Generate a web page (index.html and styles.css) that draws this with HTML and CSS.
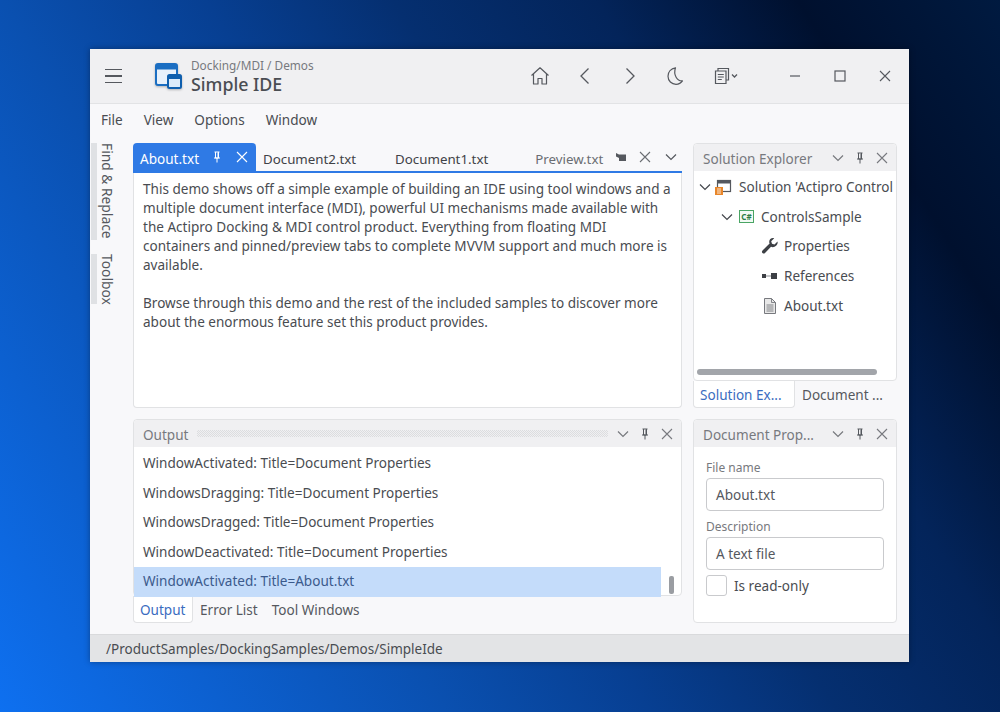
FILE: index.html
```html
<!DOCTYPE html>
<html lang="en">
<head>
<meta charset="utf-8">
<title>Simple IDE</title>
<link rel="stylesheet" href="styles.css">
</head>
<body>
<svg class="defs" width="0" height="0" aria-hidden="true">
  <defs>
    <symbol id="x" viewBox="0 0 12 12"><path d="M1 1l10 10M11 1L1 11" fill="none" stroke="currentColor" stroke-width="1.1"/></symbol>
    <symbol id="chev" viewBox="0 0 12 8"><path d="M1 1.5l5 5 5-5" fill="none" stroke="currentColor" stroke-width="1.2"/></symbol>
    <symbol id="pin" viewBox="0 0 8 12"><path d="M1.5 1h5M2.5 1v6h3V1M1 7h6M4 7v4.5M5 1.500v5" fill="none" stroke="currentColor" stroke-width="1"/></symbol>
  </defs>
</svg>
<div class="window">
  <header class="titlebar">
    <button class="hamburger" aria-label="Menu"><span></span><span></span><span></span></button>
    <svg class="logo" width="28" height="28" viewBox="0 0 28 28">
      <rect x="1" y="2" width="21" height="21" rx="2" fill="#e8f1fb" stroke="#1b6ec2" stroke-width="2"/>
      <path d="M1 3h21v4.500H1z" fill="#1b6ec2"/>
      <rect x="13" y="13" width="13" height="13" rx="1.500" fill="#dcebfa" stroke="#0f5fae" stroke-width="2"/>
      <path d="M13 14h13v3H13z" fill="#0f5fae"/>
    </svg>
    <div class="brand">
      <div class="crumb">Docking/MDI / Demos</div>
      <div class="app">Simple IDE</div>
    </div>
    <div class="tools">
      <svg class="tool" width="20" height="20" viewBox="0 0 20 20"><path d="M1.500 9.500L10 1.800l8.500 7.700M3.500 8v10h4.500v-5.500h4V18h4.500V8" fill="none" stroke="#55585e" stroke-width="1.200" stroke-linejoin="round"/></svg>
      <svg class="tool" width="20" height="20" viewBox="0 0 20 20"><path d="M13.500 2.500L6 10l7.500 7.500" fill="none" stroke="#55585e" stroke-width="1.300"/></svg>
      <svg class="tool" width="20" height="20" viewBox="0 0 20 20"><path d="M6.500 2.500L14 10l-7.500 7.500" fill="none" stroke="#55585e" stroke-width="1.300"/></svg>
      <svg class="tool" width="20" height="20" viewBox="0 0 20 20"><path d="M10.500 1.800C6 2.500 3 6 3 10.300c0 4.500 3.600 8 8 8 2.800 0 5-1.200 6.500-3.400-5.200.5-9.500-6-7-13.100z" fill="none" stroke="#55585e" stroke-width="1.200" stroke-linejoin="round"/></svg>
      <svg class="tool wide" width="27" height="20" viewBox="0 0 27 20"><path d="M4 5V2.500h10.500v11.500H12M1.500 5h10.500v12.500H1.500zM3.800 8.500h6M3.800 11h6M3.800 13.500h4" fill="none" stroke="#55585e" stroke-width="1.200"/><path d="M18 8.500l2.500 2.500 2.500-2.500" fill="none" stroke="#55585e" stroke-width="1.300"/></svg>
    </div>
    <div class="winbtns">
      <svg width="12" height="12" viewBox="0 0 12 12"><path d="M1 6h10" stroke="#55585e" stroke-width="1.200"/></svg>
      <svg width="12" height="12" viewBox="0 0 12 12"><rect x="1" y="1" width="10" height="10" fill="none" stroke="#55585e" stroke-width="1.200"/></svg>
      <svg width="12" height="12" class="wx"><use href="#x"/></svg>
    </div>
  </header>
  <nav class="menu"><span>File</span><span>View</span><span>Options</span><span>Window</span></nav>
  <div class="main">
    <aside class="rail">
      <div class="railtab first">Find &amp; Replace</div>
      <div class="railtab">Toolbox</div>
    </aside>
    <div class="dock">
      <section class="doc">
        <div class="doctabs">
          <div class="dtab active">About.txt<svg class="pin" width="8" height="12"><use href="#pin"/></svg><svg class="xi" width="12" height="12"><use href="#x"/></svg></div>
          <div class="dtab d2">Document2.txt</div>
          <div class="dtab d1">Document1.txt</div>
          <div class="dtab prev">Preview.txt</div>
          <svg class="previcon" width="10" height="8" viewBox="0 0 10 8"><path d="M0 0l3 1.500h7V8H3V5L0 3.500z" fill="#55585e"/></svg>
          <svg class="xi gr" width="12" height="12"><use href="#x"/></svg>
          <svg class="chev" width="12" height="8"><use href="#chev"/></svg>
        </div>
        <div class="docbody">
          <p>This demo shows off a simple example of building an IDE using tool windows and a multiple document interface (MDI), powerful UI mechanisms made available with the Actipro Docking &amp; MDI control product. Everything from floating MDI containers and pinned/preview tabs to complete MVVM support and much more is available.</p>
          <p>Browse through this demo and the rest of the included samples to discover more about the enormous feature set this product provides.</p>
        </div>
      </section>

      <section class="side">
        <div class="panel grow">
          <div class="phead"><span class="ptitle">Solution Explorer</span><svg class="chev" width="12" height="8"><use href="#chev"/></svg><svg class="pin" width="8" height="12"><use href="#pin"/></svg><svg class="xi" width="12" height="12"><use href="#x"/></svg></div>
          <div class="tree">
            <div class="node l0"><svg class="tw" width="12" height="8"><use href="#chev"/></svg>
              <svg class="ni" width="18" height="18" viewBox="0 0 18 18"><rect x="3.500" y="2.500" width="13" height="11" fill="#fff" stroke="#55585e" stroke-width="1.200"/><path d="M3.500 3h13v2.500h-13z" fill="#55585e"/><rect x="1" y="9" width="8" height="8" fill="#e8862a"/><path d="M3 11h4M3 13h4M3 15h4" stroke="#fff" stroke-width=".8"/></svg>
              <span class="clip">Solution 'Actipro Control</span></div>
            <div class="node l1"><svg class="tw" width="12" height="8"><use href="#chev"/></svg>
              <span class="cs">C#</span>ControlsSample</div>
            <div class="node l2">
              <svg class="ni" width="18" height="18" viewBox="0 0 18 18"><path d="M16.500 4.500l-3 3-2.500-.8-.8-2.500 3-3c-2.500-.8-5 1-5 3.500 0 .7.100 1.200.4 1.800L1.500 13.500c-.8.800-.8 1.800 0 2.500s1.700.8 2.500 0L10 9.800c.6.300 1.200.4 1.800.4 2.700 0 5.500-2.700 4.700-5.700z" fill="#3d4045"/></svg>Properties</div>
            <div class="node l2">
              <svg class="ni" width="18" height="18" viewBox="0 0 18 18"><rect x="1" y="7" width="4" height="4" fill="#3d4045"/><path d="M5 9h5" stroke="#8a8d92"/><rect x="10" y="6" width="6" height="6" fill="#3d4045"/></svg>References</div>
            <div class="node l2">
              <svg class="ni" width="18" height="18" viewBox="0 0 18 18"><path d="M3.500 1.500h7l4 4v11h-11z" fill="#e8e8e8" stroke="#77797e"/><path d="M10.500 1.500v4h4M5.500 8h7M5.500 10h7M5.500 12h7M5.500 14h7" fill="none" stroke="#77797e" stroke-width=".9"/></svg>About.txt</div>
          </div>
          <div class="hscroll"><span></span></div>
        </div>
        <div class="ptabs">
          <div class="ptab on">Solution Ex...</div>
          <div class="ptab">Document ...</div>
        </div>
      </section>

      <section class="out">
        <div class="panel grow">
          <div class="phead"><span class="ptitle short">Output</span><span class="grip"></span><svg class="chev" width="12" height="8"><use href="#chev"/></svg><svg class="pin" width="8" height="12"><use href="#pin"/></svg><svg class="xi" width="12" height="12"><use href="#x"/></svg></div>
          <div class="log">
            <div class="line">WindowActivated: Title=Document Properties</div>
            <div class="line">WindowsDragging: Title=Document Properties</div>
            <div class="line">WindowsDragged: Title=Document Properties</div>
            <div class="line">WindowDeactivated: Title=Document Properties</div>
            <div class="line sel">WindowActivated: Title=About.txt</div>
            <span class="vthumb"></span>
          </div>
        </div>
        <div class="ptabs low">
          <div class="ptab on">Output</div>
          <div class="ptab">Error List</div>
          <div class="ptab">Tool Windows</div>
        </div>
      </section>

      <section class="props panel">
        <div class="phead"><span class="ptitle">Document Prop...</span><svg class="chev" width="12" height="8"><use href="#chev"/></svg><svg class="pin" width="8" height="12"><use href="#pin"/></svg><svg class="xi" width="12" height="12"><use href="#x"/></svg></div>
        <form class="form">
          <label class="lab">File name</label>
          <div class="input">About.txt</div>
          <label class="lab second">Description</label>
          <div class="input">A text file</div>
          <div class="check"><span class="box"></span>Is read-only</div>
        </form>
      </section>
    </div>
  </div>
  <footer class="status">/ProductSamples/DockingSamples/Demos/SimpleIde</footer>
</div>
</body>
</html>
```

FILE: styles.css
```css
* { box-sizing: border-box; }
html, body { height: 100%; }
body {
  margin: 0;
  padding: 49px 91px 50px 90px;
  overflow: hidden;
  background: linear-gradient(58deg, #0e70f0 0%, #0a50b0 31%, #073f92 45%, #052f70 58%, #03245a 72%, #00102e 86%, #001a40 100%);
  font-family: "Noto Sans", "Open Sans", sans-serif;
  font-size: 13.55px;
  color: #494c51;
}
.defs { position: absolute; }
svg { display: block; flex: none; }
.window {
  height: 613px;
  display: flex;
  flex-direction: column;
  background: #f8f8fa;
  box-shadow: 0 0 6px rgba(0, 0, 0, .35);
}
.titlebar {
  height: 55px;
  flex: none;
  display: flex;
  align-items: center;
  background: #f0f0f2;
  border-bottom: 1px solid #e2e3e5;
}
.hamburger {
  width: 17px;
  height: 14px;
  margin-left: 15px;
  padding: 0;
  border: 0;
  background: none;
  display: flex;
  flex-direction: column;
  justify-content: space-between;
}
.hamburger span { display: block; height: 1.300px; background: #55585e; }
.logo { margin-left: 33px; filter: drop-shadow(0 1px 1px rgba(0,0,0,.25)); }
.brand { margin-left: 8px; }
.crumb { font-size: 11.800px; line-height: 15px; color: #77797e; }
.app { font-size: 17.800px; line-height: 22px; font-weight: 500; color: #4a4d52; }
.tools { margin-left: auto; display: flex; align-items: center; gap: 25px; }
.tool.wide { margin-left: 4px; }
.winbtns { margin-left: 48px; margin-right: 18px; display: flex; gap: 33px; color: #55585e; }
.menu {
  height: 33px;
  flex: none;
  display: flex;
  align-items: center;
  gap: 21px;
  padding: 0 0 2px 11px;
}
.main { flex: 1; display: flex; min-height: 0; }
.rail { width: 43px; flex: none; padding-top: 6px; }
.railtab {
  writing-mode: vertical-rl;
  width: 27px;
  margin-left: 1px;
  font-size: 13.800px;
  line-height: 22px;
  color: #55585e;
  border-left: 6px solid #dfe1e4;
}
.railtab.first { height: 97px; margin-bottom: 14px; }
.railtab:not(.first) { height: 50px; }
.dock {
  flex: 1;
  display: grid;
  grid-template-columns: 549px 204px;
  grid-template-rows: 265px 204px;
  gap: 11px;
  padding-top: 6px;
  align-content: start;
}
.doc, .side, .out { display: flex; flex-direction: column; min-width: 0; min-height: 0; }
.doctabs {
  height: 30px;
  flex: none;
  display: flex;
  align-items: center;
  font-size: 13.300px;
  color: #3f4247;
  border-bottom: 2px solid #2f7ae5;
}
.dtab { height: 28px; display: flex; align-items: center; flex: none; padding-top: 4px; }
.dtab.active {
  width: 123px;
  padding-left: 7px;
  font-size: 13.550px;
  background: #2f7ae5;
  color: #fff;
  border-radius: 4px 4px 0 0;
}
.dtab.active .pin { margin-left: 14px; margin-top: -4px; }
.dtab.active .xi { margin-left: 15px; margin-top: -4px; }
.d2 { margin-left: 7px; }
.d1 { margin-left: 39px; }
.prev { margin-left: 47px; color: #6a6d72; }
.previcon { margin-left: 13px; }
.xi.gr { margin-left: 13px; color: #6a6d72; }
.doctabs .chev { margin-left: 14px; color: #55585e; }
.docbody {
  flex: 1;
  padding: 7px 9px;
  background: #fff;
  border: 1px solid #e1e2e4;
  border-top: 0;
  border-radius: 0 0 4px 4px;
  line-height: 19px;
}
.docbody p { margin: 0 0 19px; }
.panel {
  display: flex;
  flex-direction: column;
  background: #fff;
  border: 1px solid #e1e2e4;
  border-radius: 4px;
  min-height: 0;
}
.grow { flex: 1; }
.phead {
  height: 27px;
  flex: none;
  display: flex;
  align-items: center;
  padding: 0 8px 0 9px;
  background: #f0f0f2;
  border-radius: 4px 4px 0 0;
  color: #77797e;
}
.ptitle { flex: 1; white-space: nowrap; padding-top: 2px; }
.ptitle.short { flex: none; }
.phead .chev { color: #77797e; }
.phead .pin { margin-left: 12px; color: #55585e; }
.phead .xi { margin-left: 12px; color: #77797e; }
.grip {
  flex: 1;
  height: 7px;
  margin: 0 9px;
  background: repeating-conic-gradient(#dcdddf 0 25%, #f0f0f2 0 50%) 0 0 / 2px 2px;
}
.tree { flex: 1; padding-top: 1px; overflow: hidden; }
.node {
  height: 29.800px;
  display: flex;
  align-items: center;
  white-space: nowrap;
}
.node .tw { color: #44474c; }
.node .ni { margin-right: 5px; }
.l0 { padding-left: 5px; }
.l0 .ni { margin-left: 3px; margin-right: 7px; }
.l1 { padding-left: 27px; }
.l1 .tw { margin-right: 6px; }
.l2 { padding-left: 67px; }
.cs {
  width: 15px;
  height: 13px;
  margin-right: 7px;
  border: 1px solid #4aa564;
  color: #2f7d45;
  font-size: 8px;
  font-weight: 700;
  line-height: 11px;
  text-align: center;
  background: #f2faf4;
}
.hscroll { height: 12px; flex: none; padding: 1px 19px 5px 3px; }
.hscroll span { display: block; height: 6px; background: #a2a5aa; border-radius: 3px; }
.ptabs { height: 27px; flex: none; display: flex; color: #55585e; }
.ptab { height: 27px; line-height: 29px; padding: 0 7px; white-space: nowrap; }
.ptab.on {
  color: #3a6cc0;
  background: #fff;
  border: 1px solid #e1e2e4;
  border-top: 0;
  border-radius: 0 0 4px 4px;
  padding: 0 6px;
}
.side .ptab.on { width: 102px; }
.log { flex: 1; position: relative; padding-top: 2px; }
.line { height: 29.600px; line-height: 28.500px; padding-left: 9px; }
.line.sel { width: 527px; background: #c4dcfa; color: #3b5a8c; }
.vthumb {
  position: absolute;
  right: 7px;
  bottom: 3px;
  width: 5px;
  height: 18px;
  background: #9a9da2;
  border-radius: 2px;
}
.low .ptab.on { width: 60px; }
.form { padding: 12px 12px 0; display: flex; flex-direction: column; }
.lab { font-size: 12px; line-height: 17px; color: #77797e; }
.second { margin-top: 7px; }
.input {
  height: 33px;
  margin-top: 2px;
  padding-left: 9px;
  line-height: 33px;
  border: 1px solid #c9cacd;
  border-radius: 4px;
  background: #fff;
  color: #55585e;
}
.check { display: flex; align-items: center; gap: 7px; margin-top: 5px; }
.box { width: 21px; height: 21px; border: 1px solid #c9cacd; border-radius: 3px; }
.status {
  height: 28px;
  flex: none;
  margin-top: auto;
  padding-left: 16px;
  font-size: 13.500px;
  line-height: 28px;
  background: #e3e4e6;
  border-top: 1px solid #d9dadc;
}
```
